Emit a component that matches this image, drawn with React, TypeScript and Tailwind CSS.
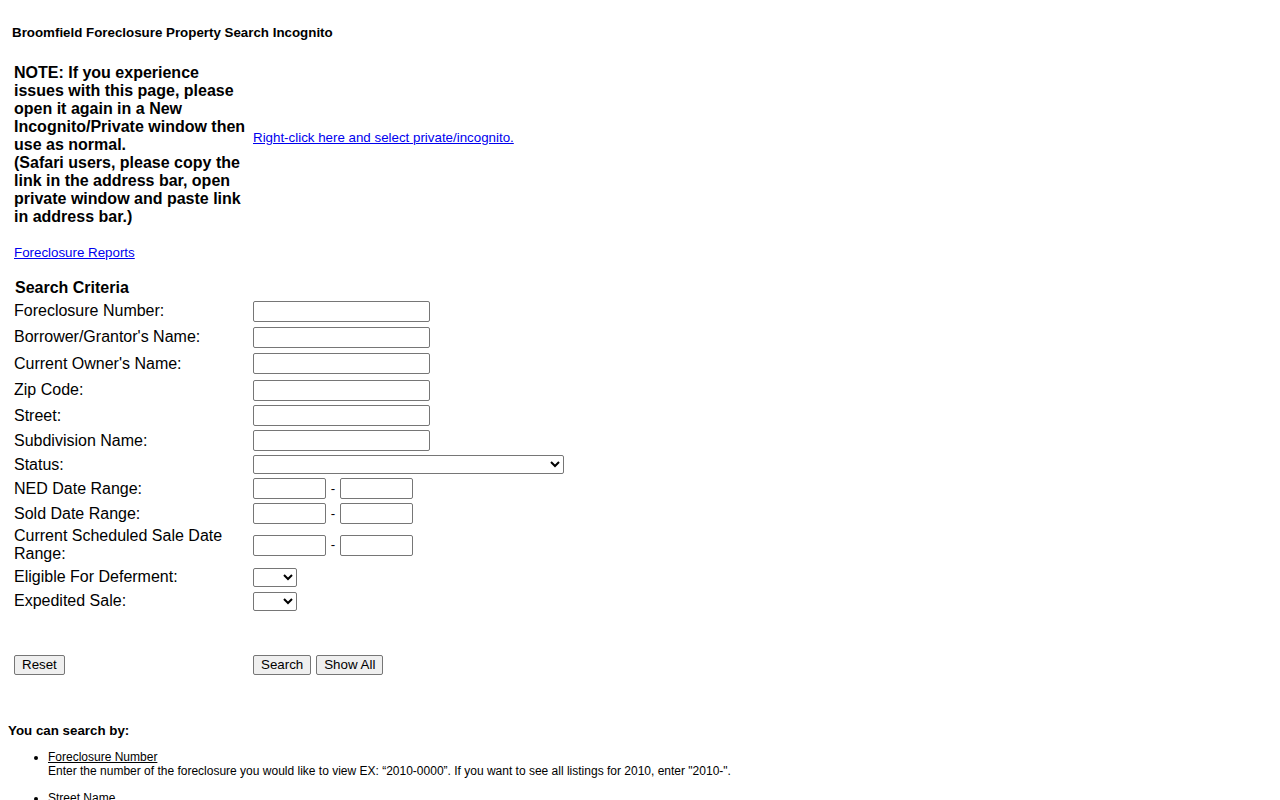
import React from "react";

const inputCls =
  "h-[21px] border border-[#767676] rounded-[2px] bg-white px-1 text-[13.33px] outline-none";
const selectCls =
  "h-[19px] border border-[#767676] rounded-[2px] bg-white text-[13.33px] outline-none";
const btnCls =
  "h-[20px] px-[7px] border border-[#767676] rounded-[2px] bg-[#efefef] text-[13.33px] leading-none text-black";

function Row({
  label,
  h,
  children,
}: {
  label: React.ReactNode;
  h: string;
  children?: React.ReactNode;
}) {
  return (
    <div className={`flex items-center ${h}`}>
      <div className="w-[239px] text-[16px] leading-[18px]">{label}</div>
      <div className="flex items-center">{children}</div>
    </div>
  );
}

function DateRange() {
  return (
    <>
      <input className={`${inputCls} w-[73px]`} />
      <span className="w-[14px] text-center text-[13.33px]">-</span>
      <input className={`${inputCls} w-[73px]`} />
    </>
  );
}

export default function App() {
  return (
    <div className="min-h-screen bg-white text-black font-['Liberation_Sans',Arial,sans-serif]">
      <div className="pl-[12px] pt-[25px] text-[13.33px] leading-[15px] font-bold">
        Broomfield Foreclosure Property Search Incognito
      </div>

      <div className="pl-[14px] pt-[24px]">
        <div className="flex items-start">
          <div className="w-[239px] text-[16px] leading-[18px] font-bold whitespace-nowrap">
            NOTE: If you experience
            <br />
            issues with this page, please
            <br />
            open it again in a New
            <br />
            Incognito/Private window then
            <br />
            use as normal.
            <br />
            (Safari users, please copy the
            <br />
            link in the address bar, open
            <br />
            private window and paste link
            <br />
            in address bar.)
          </div>
          <a
            href="#"
            className="mt-[66px] text-[13.33px] leading-[15px] text-[#0000ee] underline"
          >
            Right-click here and select private/incognito.
          </a>
        </div>

        <div className="pt-[14px]">
          <a href="#" className="text-[13.33px] leading-[15px] text-[#0000ee] underline">
            Foreclosure Reports
          </a>
        </div>

        <form className="pt-[14px]" onSubmit={(e) => e.preventDefault()}>
          <div className="flex h-[20px] items-center pl-[1px] text-[16px] font-bold">
            Search Criteria
          </div>
          <Row label="Foreclosure Number:" h="h-[26px]">
            <input className={`${inputCls} w-[177px]`} />
          </Row>
          <Row label="Borrower/Grantor's Name:" h="h-[26px]">
            <input className={`${inputCls} w-[177px]`} />
          </Row>
          <Row label="Current Owner's Name:" h="h-[27px]">
            <input className={`${inputCls} w-[177px]`} />
          </Row>
          <Row label="Zip Code:" h="h-[26px]">
            <input className={`${inputCls} w-[177px]`} />
          </Row>
          <Row label="Street:" h="h-[25px]">
            <input className={`${inputCls} w-[177px]`} />
          </Row>
          <Row label="Subdivision Name:" h="h-[25px]">
            <input className={`${inputCls} w-[177px]`} />
          </Row>
          <Row label="Status:" h="h-[23px]">
            <select className={`${selectCls} w-[311px]`}>
              <option></option>
            </select>
          </Row>
          <Row label="NED Date Range:" h="h-[25px]">
            <DateRange />
          </Row>
          <Row label="Sold Date Range:" h="h-[25px]">
            <DateRange />
          </Row>
          <Row
            label={
              <>
                Current Scheduled Sale Date
                <br />
                Range:
              </>
            }
            h="h-[38px]"
          >
            <DateRange />
          </Row>
          <Row label="Eligible For Deferment:" h="h-[26px]">
            <select className={`${selectCls} w-[44px]`}>
              <option></option>
            </select>
          </Row>
          <Row label="Expedited Sale:" h="h-[22px]">
            <select className={`${selectCls} w-[44px]`}>
              <option></option>
            </select>
          </Row>

          <div className="flex items-center pt-[43px]">
            <div className="flex w-[239px] items-center">
              <button type="reset" className={btnCls}>
                Reset
              </button>
            </div>
            <div className="flex items-center gap-[5px]">
              <button type="submit" className={btnCls}>
                Search
              </button>
              <button type="button" className={btnCls}>
                Show All
              </button>
            </div>
          </div>
        </form>
      </div>

      <div className="pl-[8px] pt-[48px]">
        <div className="text-[13.33px] leading-[15px] font-bold">You can search by:</div>
        <ul className="list-disc pl-[40px] pt-[12px] text-[12px] leading-[14px]">
          <li className="pb-[13px]">
            <span className="underline">Foreclosure Number</span>
            <br />
            Enter the number of the foreclosure you would like to view EX: “2010-0000”. If you
            want to see all listings for 2010, enter "2010-".
          </li>
          <li className="pb-[13px]">
            <span className="underline">Street Name</span>
            <br />
            Enter the street name of the property you would like to view.
          </li>
        </ul>
      </div>
    </div>
  );
}
